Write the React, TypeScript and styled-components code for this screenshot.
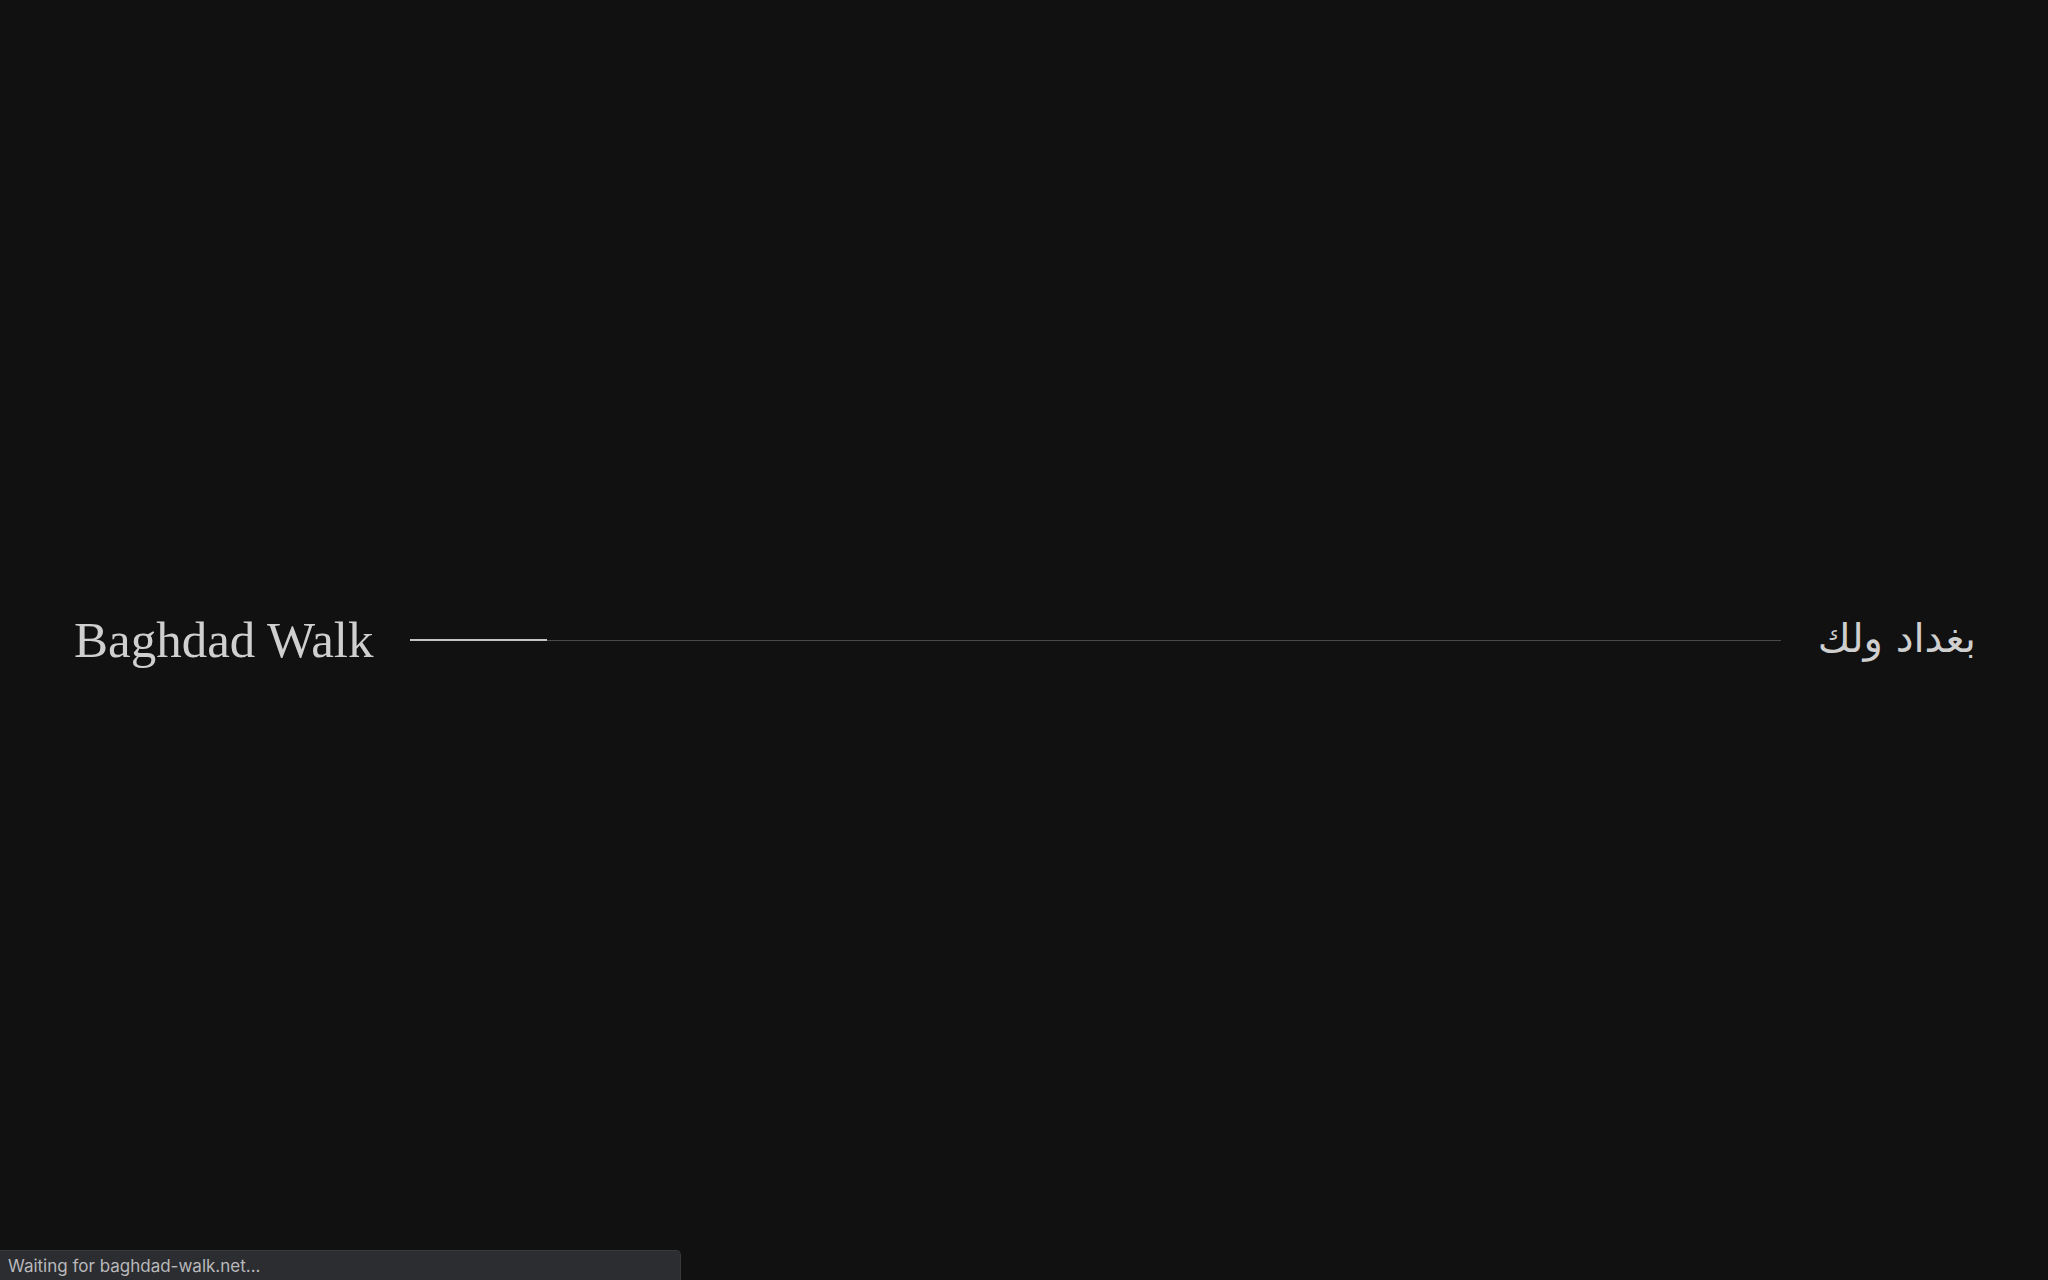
import React from 'react';
import styled, { createGlobalStyle } from 'styled-components';

const GlobalStyle = createGlobalStyle`
  html, body {
    margin: 0;
    padding: 0;
    background: #111111;
  }
`;

const Page = styled.div`
  min-height: 100vh;
  display: flex;
  align-items: center;
  gap: 37px;
  padding: 0 72px 0 74px;
  box-sizing: border-box;
`;

const Title = styled.h1`
  margin: 0;
  font-family: "Liberation Serif", "Times New Roman", serif;
  font-weight: normal;
  font-size: 51px;
  line-height: 1;
  color: #cfcfcf;
  white-space: nowrap;
  position: relative;
  top: 0px;
`;

const ArabicTitle = styled(Title)`
  font-family: "DejaVu Sans", "Noto Sans", sans-serif;
  font-size: 40px;
  top: -2px;
`;

const Track = styled.div`
  flex: 1;
  height: 1px;
  background: #4a4a4a;
  position: relative;
`;

const Fill = styled.div`
  position: absolute;
  left: 0;
  top: -0.5px;
  height: 2px;
  background: #c4c4c4;
`;

const StatusBubble = styled.div`
  position: fixed;
  left: 0;
  bottom: 0;
  width: 681px;
  height: 30px;
  box-sizing: border-box;
  padding: 0 8px;
  display: flex;
  align-items: center;
  background: #2c2d30;
  border-top: 1px solid #38393c;
  border-right: 1px solid #38393c;
  border-top-right-radius: 5px;
  font-family: "Inter", "Liberation Sans", sans-serif;
  font-size: 17px;
  color: #b9b9bc;
`;

export default function App() {
  const progress = 137 / 1374;
  return (
    <>
      <GlobalStyle />
      <Page>
        <Title>Baghdad Walk</Title>
        <Track>
          <Fill style={{ width: `${progress * 100}%` }} />
        </Track>
        <ArabicTitle as="div" dir="rtl" lang="ar">بغداد ولك</ArabicTitle>
      </Page>
      <StatusBubble>Waiting for baghdad-walk.net...</StatusBubble>
    </>
  );
}
